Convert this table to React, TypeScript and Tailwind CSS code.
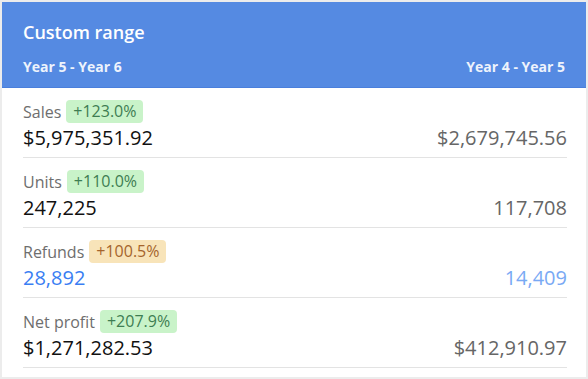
import React from "react";

type Row = {
  label: string;
  badge: string;
  tone: "green" | "orange";
  value: string;
  prev: string;
  blue?: boolean;
};

const rows: Row[] = [
  { label: "Sales", badge: "+123.0%", tone: "green", value: "$5,975,351.92", prev: "$2,679,745.56" },
  { label: "Units", badge: "+110.0%", tone: "green", value: "247,225", prev: "117,708" },
  { label: "Refunds", badge: "+100.5%", tone: "orange", value: "28,892", prev: "14,409", blue: true },
  { label: "Net profit", badge: "+207.9%", tone: "green", value: "$1,271,282.53", prev: "$412,910.97" },
];

export default function App() {
  return (
    <div className="w-[588px] h-[379px] bg-white" style={{ fontFamily: '"Open Sans", sans-serif' }}>
      <div className="w-full h-full border-2 border-[#ececec] flex flex-col">
        <div className="bg-[#558ae2] border-b border-[#4a7fdc] px-[21px] pt-[17px] h-[86px]">
          <div className="text-white text-[18px] font-semibold leading-[26px]">Custom range</div>
          <div className="flex justify-between text-[#eef3fc] text-[14px] font-bold mt-[12px] leading-[20px]">
            <span>Year 5 - Year 6</span>
            <span>Year 4 - Year 5</span>
          </div>
        </div>
        <div className="pl-[21px] pr-[19px]">
          {rows.map((r) => (
            <div key={r.label} className="flex justify-between items-end border-b border-[#e3e3e3] pt-[11px] pb-[5px]">
              <div>
                <div className="flex items-center gap-[5px] h-[25px]">
                  <span className="text-[#6e6e6e] text-[16px]">{r.label}</span>
                  <span
                    className={
                      r.tone === "green"
                        ? "bg-[#c9f3c9] text-[#3e7d52] text-[16px] leading-[23px] px-[7px] rounded-[4px]"
                        : "bg-[#f8e4b9] text-[#a5642c] text-[16px] leading-[23px] px-[7px] rounded-[4px]"
                    }
                  >
                    {r.badge}
                  </span>
                </div>
                <div className={r.blue ? "text-[#3a7ef3] text-[20px] leading-[28px]" : "text-[#111111] text-[20px] leading-[28px]"}>
                  {r.value}
                </div>
              </div>
              <div className={r.blue ? "text-[#79a9f4] text-[20px] leading-[28px]" : "text-[#666666] text-[20px] leading-[28px]"}>
                {r.prev}
              </div>
            </div>
          ))}
        </div>
      </div>
    </div>
  );
}
